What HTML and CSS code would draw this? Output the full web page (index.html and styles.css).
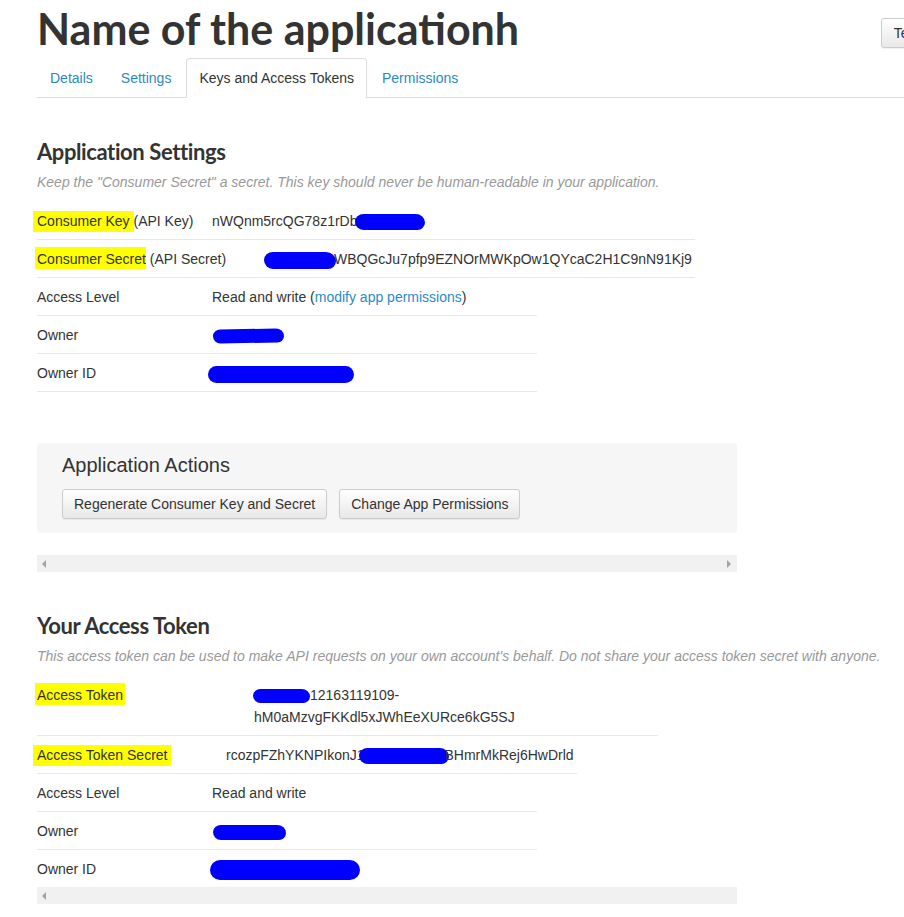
FILE: index.html
```html
<!DOCTYPE html>
<html>
<head>
<meta charset="utf-8">
<title>Keys and Access Tokens</title>
<link rel="stylesheet" href="styles.css">
</head>
<body>
<div class="page">
  <header class="app-header">
    <h1 class="app-title">Name of the applicationh</h1>
    <button class="btn btn-test">Test OAuth</button>
  </header>
  <nav class="tabs">
    <a class="tab">Details</a>
    <a class="tab">Settings</a>
    <a class="tab tab-active">Keys and Access Tokens</a>
    <a class="tab">Permissions</a>
  </nav>

  <section class="block block-settings">
    <h2 class="block-title">Application Settings</h2>
    <p class="block-desc">Keep the "Consumer Secret" a secret. This key should never be human-readable in your application.</p>
    <div class="row row-w658">
      <span class="label label-175"><span class="hl">Consumer Key</span> (API Key)</span>
      <span class="value">nWQnm5rcQG78z1rDb<span class="blob blob-ck"></span></span>
    </div>
    <div class="row row-w658">
      <span class="label label-227"><span class="hl hl-cs">Consumer Secret</span> (API Secret)</span>
      <span class="value"><span class="blob blob-cs"></span>WBQGcJu7pfp9EZNOrMWKpOw1QYcaC2H1C9nN91Kj9</span>
    </div>
    <div class="row row-w500">
      <span class="label label-175">Access Level</span>
      <span class="value">Read and write (<a class="link">modify app permissions</a>)</span>
    </div>
    <div class="row row-w500">
      <span class="label label-175">Owner</span>
      <span class="value"><span class="blob blob-owner"></span></span>
    </div>
    <div class="row row-w500">
      <span class="label label-175">Owner ID</span>
      <span class="value"><span class="blob blob-ownerid"></span></span>
    </div>
  </section>

  <section class="actions">
    <h3 class="actions-title">Application Actions</h3>
    <div class="actions-buttons">
      <button class="btn">Regenerate Consumer Key and Secret</button>
      <button class="btn">Change App Permissions</button>
    </div>
  </section>

  <div class="hscroll"><span class="arrow arrow-left"></span><span class="arrow arrow-right"></span></div>

  <section class="block block-token">
    <h2 class="block-title">Your Access Token</h2>
    <p class="block-desc">This access token can be used to make API requests on your own account's behalf. Do not share your access token secret with anyone.</p>
    <div class="row row-w621">
      <span class="label label-217"><span class="hl hl-at">Access Token</span></span>
      <span class="value"><span class="blob blob-at"></span>12163119109-<br>hM0aMzvgFKKdl5xJWhEeXURce6kG5SJ</span>
    </div>
    <div class="row row-w540">
      <span class="label label-189"><span class="hl hl-ats">Access Token Secret</span></span>
      <span class="value">rcozpFZhYKNPIkonJ1<span class="blob blob-ats"></span>BHmrMkRej6HwDrld</span>
    </div>
    <div class="row row-w500">
      <span class="label label-175">Access Level</span>
      <span class="value">Read and write</span>
    </div>
    <div class="row row-w500">
      <span class="label label-175">Owner</span>
      <span class="value"><span class="blob blob-owner2"></span></span>
    </div>
    <div class="row row-w500 row-last">
      <span class="label label-175">Owner ID</span>
      <span class="value"><span class="blob blob-ownerid2"></span></span>
    </div>
  </section>

  <div class="hscroll hscroll-bottom"><span class="arrow arrow-left"></span></div>
</div>
</body>
</html>
```

FILE: styles.css
```css
html, body {
  margin: 0;
  padding: 0;
  background: #fff;
  overflow: hidden;
}
body {
  font-family: "Liberation Sans", Arial, sans-serif;
  font-size: 14px;
  color: #333;
}
.page {
  padding-left: 37px;
  width: 1000px;
}
.app-header {
  display: flex;
  align-items: flex-start;
  width: 939px;
}
.app-title {
  font-family: Lato, "Noto Sans", sans-serif;
  font-weight: 700;
  font-size: 43px;
  line-height: 46px;
  margin: 6px 0 0 0;
  color: #333;
  letter-spacing: 0;
}
.btn {
  font-family: "Liberation Sans", Arial, sans-serif;
  font-size: 14px;
  line-height: 20px;
  color: #333;
  padding: 4px 12px;
  border: 1px solid #ccc;
  border-radius: 3px;
  background: linear-gradient(#ffffff, #e8e8e8);
  box-shadow: 0 1px 1px rgba(0,0,0,0.06);
  white-space: nowrap;
}
.btn-test {
  margin-left: auto;
  margin-top: 18px;
}
.tabs {
  display: flex;
  margin-top: 6px;
  width: 1000px;
  border-bottom: 1px solid #ddd;
}
.tab {
  display: block;
  padding: 9px 12px 9px;
  line-height: 20px;
  margin-right: 2px;
  color: #2b8ac6;
  border: 1px solid transparent;
  border-bottom: 0;
  border-radius: 4px 4px 0 0;
}
.tab-active {
  color: #333;
  border-color: #ddd;
  background: #fff;
  margin-bottom: -1px;
  padding-bottom: 10px;
}
.block-title {
  font-family: Lato, "Noto Sans", sans-serif;
  font-weight: 700;
  font-size: 22px;
  line-height: 24px;
  margin: 0;
  color: #333;
  letter-spacing: -0.4px;
}
.block-settings {
  margin-top: 42px;
}
.block-desc {
  font-style: italic;
  color: #999;
  line-height: 20px;
  margin: 8px 0 10px 0;
  white-space: nowrap;
}
.row {
  display: flex;
  align-items: flex-start;
  padding: 8px 0 7px 0;
  line-height: 22px;
  border-bottom: 1px solid #e8e8e8;
  white-space: nowrap;
}
.row-last {
  border-bottom-color: transparent;
}
.row-w658 { width: 658px; }
.row-w621 { width: 621px; }
.row-w540 { width: 540px; }
.row-w500 { width: 500px; }
.label { flex: none; }
.label-175 { width: 175px; }
.label-189 { width: 189px; }
.label-217 { width: 217px; }
.label-227 { width: 227px; }
.value { flex: none; }
.link { color: #2b8ac6; }
.hl {
  background: #ffff00;
  padding: 2px 4px 3px 4px;
  margin-left: -4px;
  margin-right: -4px;
}
.hl-cs {
  padding: 4px 0 2px 2px;
  margin-left: -2px;
  margin-right: 0;
}
.hl-at {
  padding: 4px 2px 2px 2px;
  margin-left: -2px;
}
.hl-ats {
  padding: 2px 4px 3px 4px;
}
.blob {
  display: inline-block;
  background: #0000ff;
  vertical-align: middle;
  border-radius: 9px 10px 8px 9px / 8px 9px 8px 9px;
}
.blob-ck { width: 70px; height: 16px; margin-left: -2px; }
.blob-cs { width: 72px; height: 17px; margin-left: 0; margin-right: -2px; }
.blob-owner { width: 71px; height: 14px; margin-left: 1px; transform: rotate(-1deg); }
.blob-ownerid { width: 146px; height: 17px; margin-left: -4px; border-radius: 9px; }
.blob-at { width: 57px; height: 14px; margin-left: -1px; }
.blob-ats { width: 90px; height: 16px; margin-left: -6px; margin-right: -4px; }
.blob-owner2 { width: 73px; height: 15px; margin-left: 1px; }
.blob-ownerid2 { width: 150px; height: 20px; margin-left: -2px; border-radius: 10px; }
.actions {
  margin-top: 51px;
  width: 700px;
  box-sizing: border-box;
  background: #f6f6f6;
  border-radius: 4px;
  padding: 10px 25px 14px;
}
.actions-title {
  font-family: "Liberation Sans", Arial, sans-serif;
  font-weight: 400;
  font-size: 20px;
  line-height: 24px;
  margin: 0 0 12px 0;
  color: #333;
}
.actions-buttons {
  display: flex;
  gap: 12px;
}
.actions-buttons .btn {
  padding: 4px 11px;
}
.hscroll {
  position: relative;
  margin-top: 22px;
  width: 700px;
  height: 17px;
  background: #f1f1f1;
}
.arrow {
  position: absolute;
  top: 5px;
  width: 0;
  height: 0;
  border-top: 4px solid transparent;
  border-bottom: 4px solid transparent;
}
.arrow-left {
  left: 5px;
  border-right: 4px solid #a3a3a3;
}
.arrow-right {
  right: 6px;
  border-left: 4px solid #a3a3a3;
}
.block-token {
  margin-top: 42px;
}
.hscroll-bottom {
  margin-top: -1px;
}
```
